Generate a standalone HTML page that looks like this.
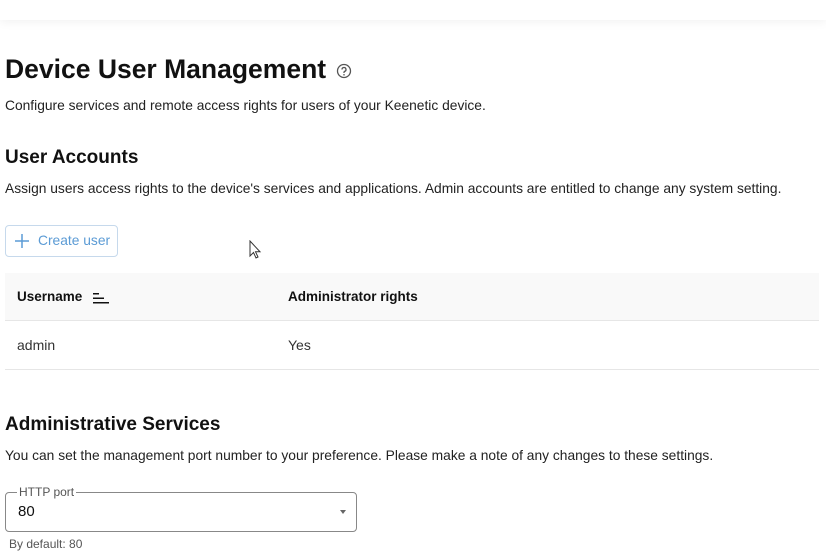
<!DOCTYPE html>
<html><head><meta charset="utf-8"><style>
*{margin:0;padding:0;box-sizing:border-box}
body{width:826px;height:551px;overflow:hidden;background:#fff;font-family:"Liberation Sans",sans-serif;color:#1a1a1a;position:relative}
.top{position:absolute;left:0;top:0;width:826px;height:20px;background:#fff;box-shadow:0 2px 10px rgba(0,0,0,0.06)}
.a{position:absolute;white-space:nowrap}
</style></head><body>
<div class="top"></div>
<div class="a" style="left:5px;top:54px;font-size:26.5px;font-weight:bold;color:#111">Device User Management</div>
<svg class="a" style="left:336px;top:63px" width="16" height="16" viewBox="0 0 16 16"><circle cx="8" cy="8" r="6.5" fill="none" stroke="#555" stroke-width="1.3"/><path d="M6 6.5a2 2 0 1 1 2.6 1.9c-.5.2-.6.5-.6 1V10" fill="none" stroke="#555" stroke-width="1.3"/><circle cx="8" cy="11.8" r=".8" fill="#555"/></svg>
<div class="a" style="left:5px;top:98px;font-size:13.8px;color:#222">Configure services and remote access rights for users of your Keenetic device.</div>
<div class="a" style="left:5px;top:147px;font-size:19px;font-weight:bold;color:#111">User Accounts</div>
<div class="a" style="left:5px;top:181px;font-size:13.8px;color:#222">Assign users access rights to the device's services and applications. Admin accounts are entitled to change any system setting.</div>
<div class="a" style="left:5px;top:225px;width:113px;height:32px;border:1px solid #c6d9ec;border-radius:4px"></div>
<svg class="a" style="left:14px;top:233px" width="16" height="16"><path d="M8 1v14M1 8h14" stroke="#5b9bd5" stroke-width="1.5"/></svg>
<div class="a" style="left:38px;top:233px;font-size:13.8px;color:#5b9bd5">Create user</div>
<svg class="a" style="left:249px;top:240px" width="13" height="20" viewBox="0 0 13 20"><path d="M1 1v15l3.5-3.5 2.5 5.5 2-1-2.5-5.2H11z" fill="#fff" stroke="#333" stroke-width="1"/></svg>
<div class="a" style="left:5px;top:273px;width:814px;height:48px;background:#f9f9f9;border-bottom:1px solid #e6e6e6"></div>
<div class="a" style="left:17px;top:289px;font-size:13.5px;font-weight:bold;color:#111">Username</div>
<svg class="a" style="left:92px;top:291px" width="18" height="14"><rect x="1" y="2" width="6" height="1.5" fill="#111"/><rect x="1" y="6.5" width="11" height="1.5" fill="#111"/><rect x="1" y="11" width="16" height="1.5" fill="#111"/></svg>
<div class="a" style="left:288px;top:289px;font-size:13.5px;font-weight:bold;color:#111">Administrator rights</div>
<div class="a" style="left:17px;top:337px;font-size:14px;color:#333">admin</div>
<div class="a" style="left:288px;top:337px;font-size:14px;color:#333">Yes</div>
<div class="a" style="left:5px;top:369px;width:814px;height:1px;background:#e6e6e6"></div>
<div class="a" style="left:5px;top:414px;font-size:19px;font-weight:bold;color:#111">Administrative Services</div>
<div class="a" style="left:5px;top:448px;font-size:13.8px;color:#222">You can set the management port number to your preference. Please make a note of any changes to these settings.</div>
<div class="a" style="left:5px;top:492px;width:352px;height:40px;border:1px solid #888;border-radius:4px"></div>
<div class="a" style="left:17px;top:485px;font-size:12px;color:#555;background:#fff;padding:0 2px">HTTP port</div>
<div class="a" style="left:18px;top:503px;font-size:15px;color:#111">80</div>
<div class="a" style="left:340px;top:510px;width:0;height:0;border-left:3px solid transparent;border-right:3px solid transparent;border-top:4px solid #666"></div>
<div class="a" style="left:9px;top:537px;font-size:12px;color:#555">By default: 80</div>
</body></html>
